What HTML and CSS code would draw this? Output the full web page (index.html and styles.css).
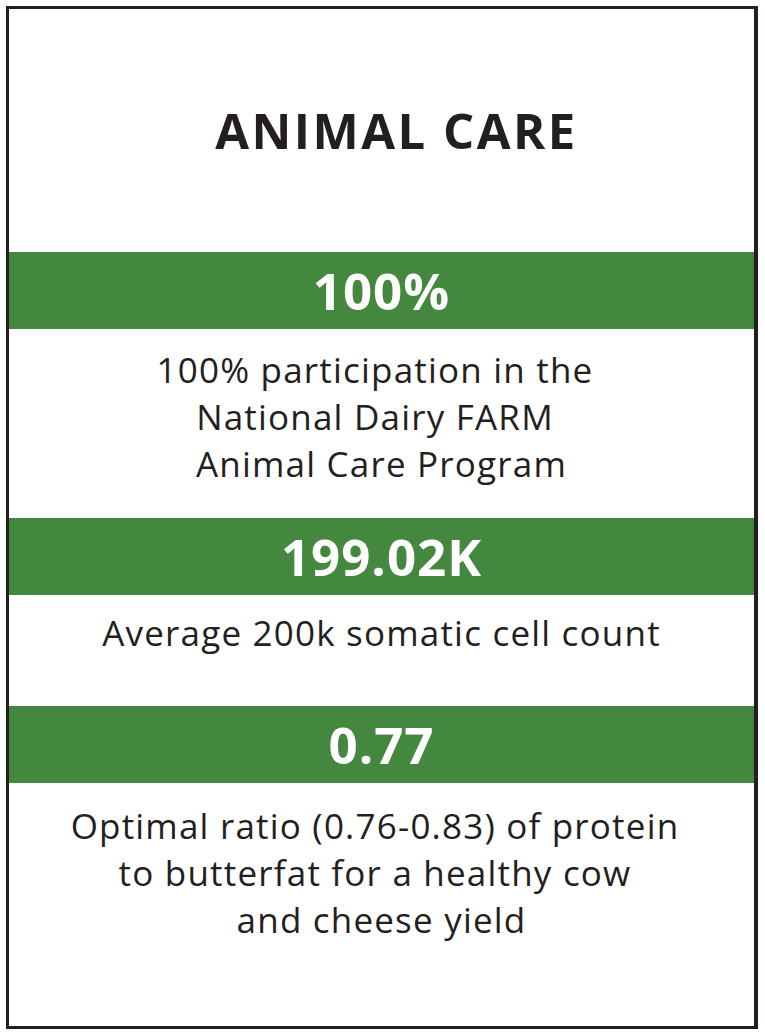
FILE: index.html
```html
<!DOCTYPE html>
<html lang="en">
<head>
<meta charset="utf-8">
<title>Animal Care</title>
<link rel="stylesheet" href="styles.css">
</head>
<body>
<div class="card">
  <header class="card-head">
    <h1 class="title">ANIMAL CARE</h1>
  </header>
  <div class="band">100%</div>
  <p class="desc desc-1"><span class="ln shift">100% participation in the</span><span class="ln shift">National Dairy FARM</span><span class="ln">Animal Care Program</span></p>
  <div class="band">199.02K</div>
  <p class="desc desc-2"><span class="ln">Average 200k somatic cell count</span></p>
  <div class="band">0.77</div>
  <p class="desc desc-3"><span class="ln shift">Optimal ratio (0.76-0.83) of protein</span><span class="ln shift">to butterfat for a healthy cow</span><span class="ln">and cheese yield</span></p>
</div>
</body>
</html>
```
FILE: styles.css
```css
html, body {
  margin: 0;
  padding: 0;
  background: #ffffff;
}
body {
  font-family: "Open Sans", "Liberation Sans", sans-serif;
  color: #231f20;
}
.card {
  margin: 6px 0 0 6px;
  width: 752px;
  height: 1023px;
  box-sizing: border-box;
  border: 3px solid #231f20;
  border-right-width: 4px;
  display: flex;
  flex-direction: column;
}
.card-head {
  height: 243px;
  display: flex;
  align-items: center;
  justify-content: center;
}
.title {
  margin: 0;
  padding-left: 30px;
  font-size: 49px;
  font-weight: 700;
  letter-spacing: 2.5px;
  line-height: 1;
  color: #231f20;
}
.band {
  height: 77px;
  background: #43883e;
  color: #ffffff;
  font-weight: 700;
  font-size: 51px;
  letter-spacing: 1px;
  display: flex;
  align-items: center;
  justify-content: center;
  line-height: 1;
}
.desc {
  margin: 0;
  text-align: center;
  font-size: 35px;
  line-height: 47px;
  letter-spacing: 1.2px;
  font-weight: 400;
  display: flex;
  flex-direction: column;
  align-items: center;
}
.ln {
  display: block;
}
.shift {
  padding-right: 13px;
}
.desc-1 {
  padding-top: 17px;
  height: 189px;
  box-sizing: border-box;
}
.desc-2 {
  padding-top: 14px;
  height: 111px;
  box-sizing: border-box;
}
.desc-3 {
  padding-top: 19px;
}
```
